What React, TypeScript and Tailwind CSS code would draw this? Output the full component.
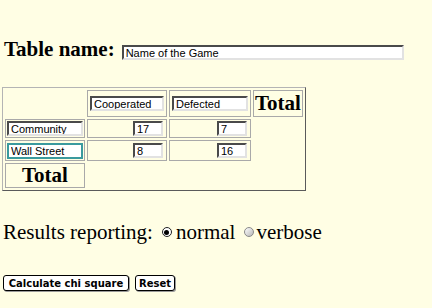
import React from "react";

const inputBase =
  "block h-[15px] bg-white px-[2px] text-[11px] leading-[11px] text-black font-['Liberation_Sans',Arial,sans-serif] border-2 border-t-[#4a4a4a] border-l-[#4a4a4a] border-b-[#e2e2e2] border-r-[#e2e2e2] outline-none";

function TextBox({ value, wide = 76, focused = false }: { value: string; wide?: number; focused?: boolean }) {
  const cls = focused
    ? "block h-[16px] bg-white px-[2px] text-[11px] leading-[11px] text-black font-['Liberation_Sans',Arial,sans-serif] border-2 border-[#3a9a9e] outline-none"
    : inputBase;
  return <input readOnly value={value} style={{ width: wide }} className={cls} />;
}

function Radio({ checked }: { checked: boolean }) {
  return checked ? (
    <span className="inline-flex h-[10px] w-[10px] items-center justify-center rounded-full border border-[#222] bg-white">
      <span className="h-[5px] w-[5px] rounded-full bg-black" />
    </span>
  ) : (
    <span className="inline-block h-[10px] w-[10px] rounded-full border border-[#8a8a8a] bg-gradient-to-br from-white to-[#b8b8b8]" />
  );
}

export default function App() {
  const cell = "border border-[#a9a9a9] p-[1px] align-middle leading-none";
  return (
    <div className="min-h-[308px] w-full bg-[#fffee4] font-['Liberation_Serif',serif] text-black">
      <div className="flex items-end pl-[4px] pt-[37px]">
        <span className="text-[21px] font-bold leading-[24px]">Table name:</span>
        <div className="mb-[1px] ml-[7px]">
          <TextBox value="Name of the Game" wide={282} />
        </div>
      </div>

      <table className="ml-[2px] mt-[26px] w-[302px] border-separate border-spacing-[2px] border border-t-[#b4b4b4] border-l-[#b4b4b4] border-b-[#5a5a5a] border-r-[#5a5a5a] leading-none">
        <tbody>
          <tr className="h-[27px]">
            <td className="w-[79px] p-[1px]" />
            <td className={`${cell} w-[79px] px-[2px]`}>
              <TextBox value="Cooperated" wide={74} />
            </td>
            <td className={`${cell} w-[79px] px-[2px]`}>
              <TextBox value="Defected" wide={76} />
            </td>
            <td className={`${cell} text-center text-[21px] font-bold`}>Total</td>
          </tr>
          <tr className="h-[19px]">
            <td className={cell}>
              <TextBox value="Community" />
            </td>
            <td className={cell}>
              <div className="flex justify-end pr-[2px]">
                <TextBox value="17" wide={30} />
              </div>
            </td>
            <td className={cell}>
              <div className="flex justify-end pr-[2px]">
                <TextBox value="7" wide={30} />
              </div>
            </td>
            <td />
          </tr>
          <tr className="h-[21px]">
            <td className={cell}>
              <TextBox value="Wall Street" focused />
            </td>
            <td className={cell}>
              <div className="flex justify-end pr-[2px]">
                <TextBox value="8" wide={30} />
              </div>
            </td>
            <td className={cell}>
              <div className="flex justify-end pr-[2px]">
                <TextBox value="16" wide={30} />
              </div>
            </td>
            <td />
          </tr>
          <tr className="h-[24px]">
            <td className={`${cell} text-center text-[21px] font-bold`}>Total</td>
            <td />
            <td />
            <td />
          </tr>
        </tbody>
      </table>

      <div className="mt-[29px] flex items-center pl-[3px] text-[21px] leading-[24px]">
        <span>Results reporting:</span>
        <span className="ml-[9px] flex items-center">
          <Radio checked />
        </span>
        <span className="ml-[4px]">normal</span>
        <span className="ml-[9px] flex items-center">
          <Radio checked={false} />
        </span>
        <span className="ml-[2px]">verbose</span>
      </div>

      <div className="mt-[31px] flex gap-[6px] pl-[3px] font-['DejaVu_Sans',sans-serif] text-[10px] font-bold">
        <button className="h-[16px] w-[126px] rounded-[3px] border border-black bg-white leading-[13px] shadow-[1px_1px_0_#9a9a9a]">
          Calculate chi square
        </button>
        <button className="h-[16px] w-[40px] rounded-[3px] border border-black bg-white leading-[13px] shadow-[1px_1px_0_#9a9a9a]">
          Reset
        </button>
      </div>
    </div>
  );
}
